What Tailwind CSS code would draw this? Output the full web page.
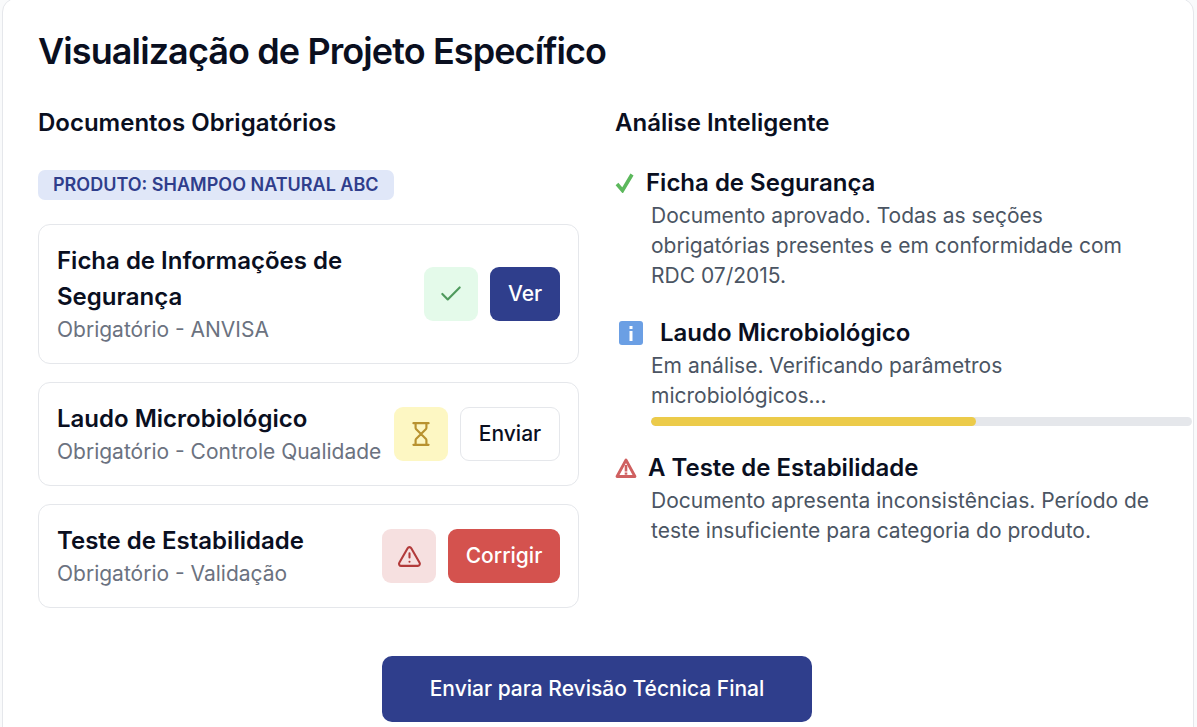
<!DOCTYPE html>
<html lang="pt-BR">
<head>
<meta charset="utf-8">
<script src="https://cdn.jsdelivr.net/npm/@tailwindcss/browser@4"></script>
</head>
<body class="bg-[#f9fafb] h-[727px] overflow-hidden font-['Inter','Liberation_Sans',sans-serif]">
<div class="ml-[2px] w-[1192px] h-[760px] -mt-[2px] bg-white border border-[#e5e7eb] rounded-[14px] pl-[35px] pt-[27px]">
  <h1 class="text-[36px] leading-[50px] font-semibold tracking-[-0.9px] text-[#0a0f1f]">Visualização de Projeto Específico</h1>
  <div class="flex gap-[36px] mt-[30px]">
    <section class="w-[541px] shrink-0">
      <h2 class="text-[24px] leading-[34px] font-semibold text-[#0a0f1f]">Documentos Obrigatórios</h2>
      <div class="mt-[30px] w-fit h-[30px] px-[15px] rounded-[7px] bg-[#e0e7f8] text-[#2f3e8c] text-[18px] leading-[30px] font-semibold">PRODUTO: SHAMPOO NATURAL ABC</div>
      <div class="mt-[24px] flex flex-col gap-[18px]">
        <div class="h-[140px] border border-[#e5e7eb] rounded-[12px] pl-[18px] pr-[18px] flex items-center justify-between">
          <div class="w-[345px]">
            <div class="text-[24px] leading-[36px] font-semibold text-[#0a0f1f]">Ficha de Informações de Segurança</div>
            <div class="text-[21px] leading-[30px] text-[#6b7280]">Obrigatório - ANVISA</div>
          </div>
          <div class="flex items-center gap-[12px]">
            <div class="w-[54px] h-[54px] rounded-[9px] bg-[#e4faea] flex items-center justify-center">
              <svg class="w-[26px] h-[26px] text-[#4f9a5d]" viewBox="0 0 24 24" fill="none" stroke="currentColor" stroke-width="2" stroke-linecap="round" stroke-linejoin="round"><path d="M20 6 9 17l-5-5"/></svg>
            </div>
            <button class="w-[70px] h-[54px] rounded-[9px] bg-[#2f3e8c] text-white text-[21px] font-medium">Ver</button>
          </div>
        </div>
        <div class="h-[104px] border border-[#e5e7eb] rounded-[12px] pl-[18px] pr-[18px] flex items-center justify-between">
          <div class="shrink-0">
            <div class="text-[24px] leading-[36px] font-semibold text-[#0a0f1f]">Laudo Microbiológico</div>
            <div class="text-[21px] leading-[30px] text-[#6b7280]">Obrigatório - Controle Qualidade</div>
          </div>
          <div class="flex items-center gap-[12px]">
            <div class="w-[54px] h-[54px] rounded-[9px] bg-[#fdf7c3] flex items-center justify-center">
              <svg class="w-[26px] h-[26px] text-[#b8922f]" viewBox="0 0 24 24" fill="none" stroke="currentColor" stroke-width="2" stroke-linecap="round" stroke-linejoin="round"><path d="M5 22h14M5 2h14M17 22v-4.2a2 2 0 0 0-.6-1.4L12 12l-4.4 4.4a2 2 0 0 0-.6 1.4V22M7 2v4.2a2 2 0 0 0 .6 1.4L12 12l4.4-4.4a2 2 0 0 0 .6-1.4V2"/></svg>
            </div>
            <button class="w-[100px] h-[54px] rounded-[9px] bg-white border border-[#e5e7eb] text-[#0a0f1f] text-[21px] font-medium">Enviar</button>
          </div>
        </div>
        <div class="h-[104px] border border-[#e5e7eb] rounded-[12px] pl-[18px] pr-[18px] flex items-center justify-between">
          <div>
            <div class="text-[24px] leading-[36px] font-semibold text-[#0a0f1f]">Teste de Estabilidade</div>
            <div class="text-[21px] leading-[30px] text-[#6b7280]">Obrigatório - Validação</div>
          </div>
          <div class="flex items-center gap-[12px]">
            <div class="w-[54px] h-[54px] rounded-[9px] bg-[#f6e0e0] flex items-center justify-center">
              <svg class="w-[25px] h-[25px] text-[#b23a3a]" viewBox="0 0 24 24" fill="none" stroke="currentColor" stroke-width="2" stroke-linecap="round" stroke-linejoin="round"><path d="m21.7 18-8-14a2 2 0 0 0-3.5 0l-8 14A2 2 0 0 0 4 21h16a2 2 0 0 0 1.7-3M12 9v4M12 17h.01"/></svg>
            </div>
            <button class="w-[112px] h-[54px] rounded-[9px] bg-[#d4524e] text-white text-[21px] font-medium">Corrigir</button>
          </div>
        </div>
      </div>
    </section>
    <section class="w-[578px] shrink-0">
      <h2 class="text-[24px] leading-[34px] font-semibold text-[#0a0f1f]">Análise Inteligente</h2>
      <div class="mt-[25px]">
        <div class="flex items-center h-[36px] text-[24px] font-semibold text-[#0a0f1f]">
          <svg class="w-[20px] h-[20px] mr-[11px]" viewBox="0 0 20 20" fill="none"><path d="M2 11 7.5 17.5 17 1.5" stroke="#5cb85c" stroke-width="3.6"/></svg>
          <span>Ficha de Segurança</span>
        </div>
        <p class="ml-[36px] text-[21px] leading-[30px] text-[#4b5563] w-[500px]">Documento aprovado. Todas as seções obrigatórias presentes e em conformidade com RDC 07/2015.</p>
      </div>
      <div class="mt-[24px]">
        <div class="flex items-center h-[36px] text-[24px] font-semibold text-[#0a0f1f]">
          <svg class="w-[24px] h-[24px] ml-[4px] mr-[17px]" viewBox="0 0 24 24"><rect x="0" y="0" width="24" height="24" rx="3" fill="#6b9fe4"/><rect x="10.5" y="10" width="3" height="10" fill="#fff"/><rect x="10.5" y="5" width="3" height="3" fill="#fff"/></svg>
          <span>Laudo Microbiológico</span>
        </div>
        <p class="ml-[36px] text-[21px] leading-[30px] text-[#4b5563] w-[500px]">Em análise. Verificando parâmetros microbiológicos...</p>
        <div class="ml-[36px] mt-[6px] w-[541px] h-[9px] rounded-full bg-[#e5e7eb] overflow-hidden">
          <div class="h-full w-[60%] rounded-full bg-[#eccb4a]"></div>
        </div>
      </div>
      <div class="mt-[24px]">
        <div class="flex items-center h-[36px] text-[24px] font-semibold text-[#0a0f1f]">
          <svg class="w-[22px] h-[22px] mr-[11px]" viewBox="0 0 22 22"><path d="M11 3 20 19.5H2Z" fill="none" stroke="#cf6060" stroke-width="2.8" stroke-linejoin="round"/><rect x="9.7" y="8" width="2.6" height="6.5" fill="#cf6060"/><rect x="9.7" y="15.5" width="2.6" height="2.2" fill="#cf6060"/></svg>
          <span>A Teste de Estabilidade</span>
        </div>
        <p class="ml-[36px] text-[21px] leading-[30px] text-[#4b5563] w-[510px]">Documento apresenta inconsistências. Período de teste insuficiente para categoria do produto.</p>
      </div>
    </section>
  </div>
  <div class="mt-[48px] ml-[344px]">
    <button class="w-[430px] h-[66px] rounded-[10px] bg-[#2f3e8c] text-white text-[21px] font-medium">Enviar para Revisão Técnica Final</button>
  </div>
</div>
</body>
</html>
